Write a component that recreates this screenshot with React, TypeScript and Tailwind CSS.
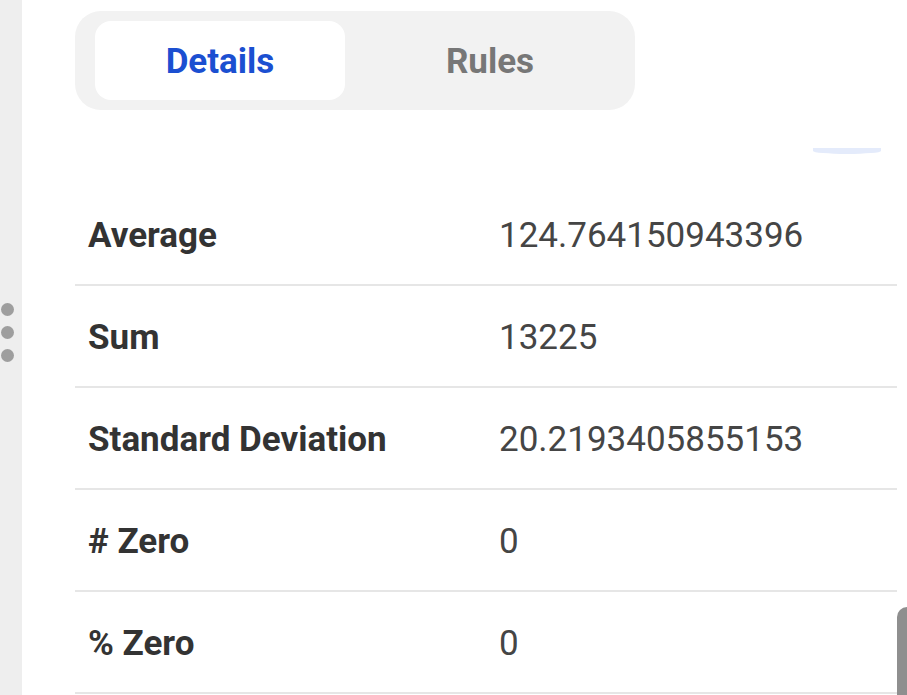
import React from "react";

const rows: [string, string][] = [
  ["Average", "124.764150943396"],
  ["Sum", "13225"],
  ["Standard Deviation", "20.2193405855153"],
  ["# Zero", "0"],
  ["% Zero", "0"],
];

export default function App() {
  return (
    <div
      className="relative flex w-[907px] h-[695px] overflow-hidden bg-white"
      style={{ fontFamily: "Roboto, 'Liberation Sans', sans-serif" }}
    >
      <div className="w-[22px] h-full bg-[#eeeeee] flex flex-col items-start pl-[1px] pt-[303px] gap-[10px] shrink-0">
        <div className="w-[13px] h-[13px] rounded-full bg-[#9e9e9e]" />
        <div className="w-[13px] h-[13px] rounded-full bg-[#9e9e9e]" />
        <div className="w-[13px] h-[13px] rounded-full bg-[#9e9e9e]" />
      </div>
      <div className="flex-1 pl-[53px] flex flex-col">
        <div className="mt-[11px] w-[560px] h-[99px] rounded-[26px] bg-[#f2f2f2] py-[10px] pl-[20px] flex shrink-0">
          <div className="w-[250px] h-full rounded-[16px] bg-white flex items-center justify-center pt-[2px] text-[35px] font-bold text-[#1b4fd1] leading-none">
            Details
          </div>
          <div className="flex-1 h-full flex items-center justify-center pt-[2px] text-[35px] font-bold text-[#777777] leading-none">
            Rules
          </div>
        </div>
        <div className="h-[74px] shrink-0 pt-[38px] pl-[738px]">
          <div className="w-[68px] h-[6px] rounded-b-[50%] bg-[#e4ebfb]" />
        </div>
        <div className="w-[822px] flex flex-col">
          {rows.map(([label, value]) => (
            <div
              key={label}
              className="h-[102px] shrink-0 flex items-center pt-[3px] border-b-2 border-[#e6e6e6] text-[35px] leading-none"
            >
              <div className="w-[424px] pl-[13px] font-bold text-[#333333] shrink-0">{label}</div>
              <div className="text-[#454545]">{value}</div>
            </div>
          ))}
        </div>
      </div>
      <div className="absolute right-0 top-[607px] w-[10px] h-[100px] rounded-l-full rounded-r-[3px] bg-[#8f8f8f]" />
    </div>
  );
}
